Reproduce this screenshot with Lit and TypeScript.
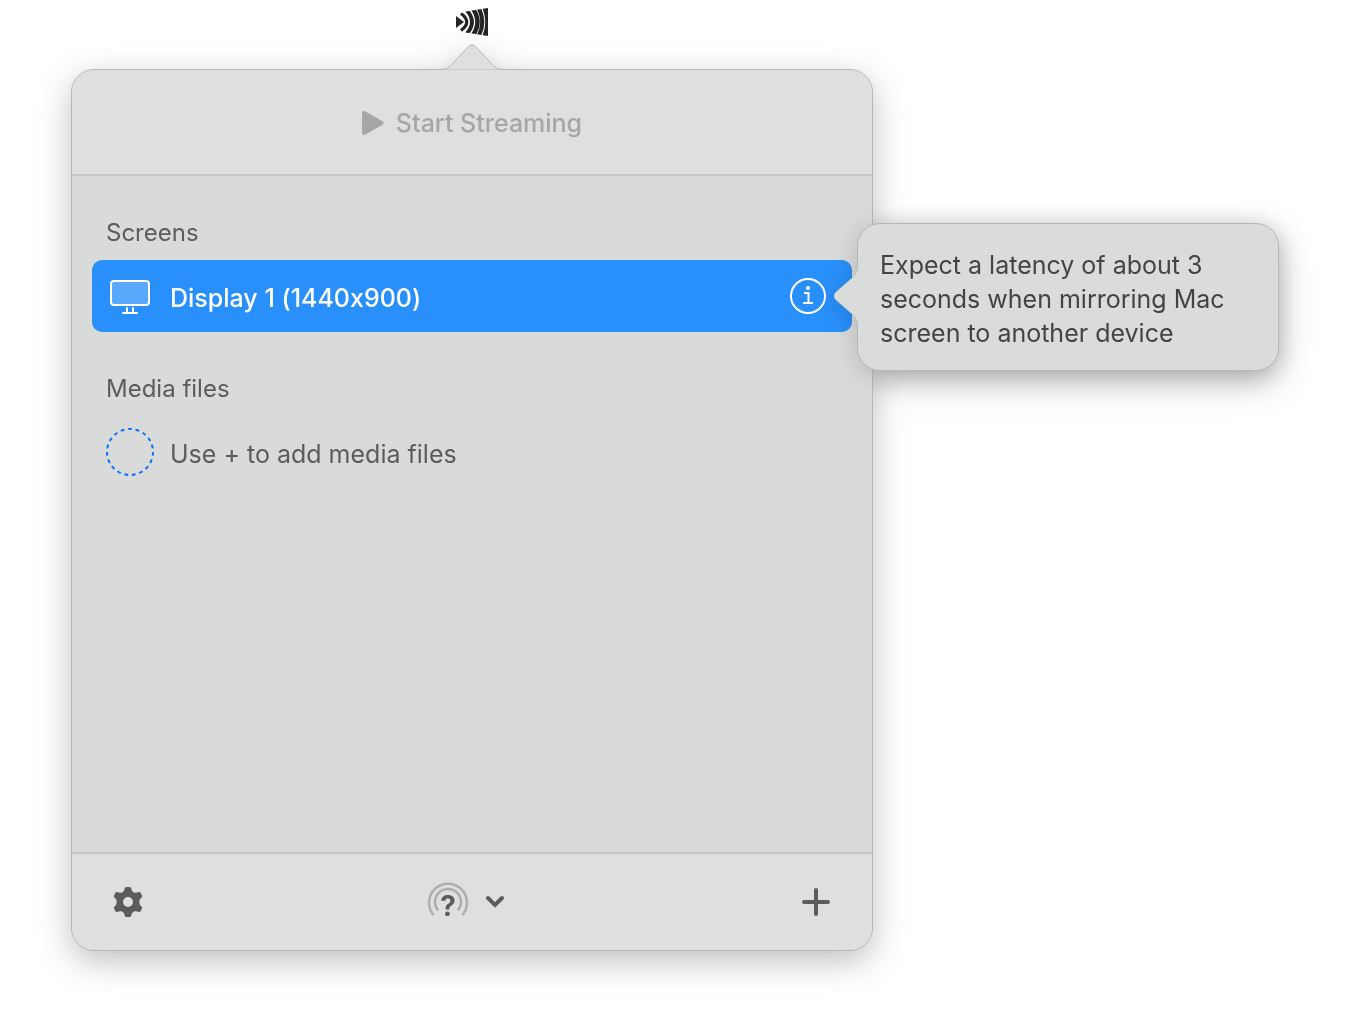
import { LitElement, html, css, svg } from "lit";
import { customElement, state } from "lit/decorators.js";

const logo = svg`
  <svg class="logo" viewBox="0 0 32 28" width="32" height="28" aria-hidden="true">
    <clipPath id="horn"><path d="M0 5 32 0v28L0 23z" /></clipPath>
    <g clip-path="url(#horn)">
      <path d="M0 8 8 14 0 20zM25.500-2Q33 14 25.500 30H34V-2z" fill="#242424" />
      <g fill="none" stroke="#242424">
        <path d="M5 5.500Q16.500 14 5 22.500" stroke-width="3.200" />
        <path d="M10.500 2Q21.500 14 10.500 26" stroke-width="3.800" />
        <path d="M15.500-1Q27.500 14 15.500 29" stroke-width="4.400" />
        <path d="M21.500-2Q31 14 21.500 30" stroke-width="4.200" />
      </g>
    </g>
  </svg>`;

@customElement("app-root")
export class AppRoot extends LitElement {
  @state() private hint = true;

  static styles = css`
    :host {
      display: block;
      min-height: 100vh;
      box-sizing: border-box;
      padding: 8px 71px 79px;
      background: #fff;
      color: #5b5d5c;
      font: 400 25px/34px Inter, "Liberation Sans", sans-serif;
      font-feature-settings: "calt" 0;
    }
    button {
      display: flex;
      align-items: center;
      margin: 0;
      padding: 0;
      border: 0;
      background: none;
      color: inherit;
      font: inherit;
    }
    svg {
      display: block;
      flex: none;
    }
    h2 {
      margin: 0 14px 10px;
      font-size: 24px;
      font-weight: 400;
      line-height: 34px;
    }
    ul {
      margin: 0 0 40px;
      padding: 0;
      list-style: none;
    }
    .popover {
      display: flex;
      flex-direction: column;
      align-items: center;
      max-width: 802px;
    }
    .window {
      display: flex;
      flex-direction: column;
      width: 100%;
      margin-top: 8px;
      filter: drop-shadow(0 10px 16px rgba(0, 0, 0, 0.25));
    }
    .arrow {
      align-self: center;
      margin-bottom: -1px;
      z-index: 1;
    }
    .panel {
      display: flex;
      flex-direction: column;
      box-sizing: border-box;
      min-height: calc(100vh - 148px);
      border: 1px solid #b5b6b6;
      border-radius: 23px;
      background: #d9dbda;
    }
    .top,
    .bottom {
      background: #dee0df;
    }
    .top {
      display: flex;
      justify-content: center;
      padding: 36px 0 34px;
      border-bottom: 2px solid #c4c6c5;
      border-radius: 22px 22px 0 0;
    }
    .start {
      gap: 12px;
      color: #a5a7a6;
      font-weight: 500;
    }
    .content {
      flex: 1;
      padding: 40px 20px 0;
    }
    .row {
      display: flex;
      align-items: center;
      gap: 16px;
      height: 72px;
      padding: 0 14px;
      border-radius: 10px;
    }
    .selected {
      position: relative;
      padding-right: 26px;
      background: #2990fb;
      color: #fff;
      font-weight: 500;
    }
    .name {
      flex: 1;
      padding-top: 4px;
    }
    .tip {
      position: absolute;
      top: -37px;
      left: calc(100% - 19px);
      display: flex;
      filter: drop-shadow(0 4px 12px rgba(0, 0, 0, 0.16));
      color: #434544;
      font-weight: 400;
    }
    .beak {
      margin: 43px -1px 0 0;
      z-index: 1;
    }
    .bubble {
      box-sizing: border-box;
      width: 422px;
      padding: 24px 22px 20px;
      border: 1px solid #b5b6b6;
      border-radius: 23px;
      background: #dadcdb;
    }
    .bottom {
      display: grid;
      grid-template-columns: 1fr auto 1fr;
      align-items: center;
      height: 96px;
      padding: 0 41px;
      border-top: 2px solid #c4c6c5;
      border-radius: 0 0 22px 22px;
    }
    .device {
      gap: 8px;
    }
    .add {
      justify-self: end;
    }
    .mark {
      font: 700 28px Inter, sans-serif;
    }
  `;

  render() {
    return html`
      <div class="popover">
        ${logo}
        <div class="window">
          <svg class="arrow" viewBox="0 0 60 26" width="60" height="26" aria-hidden="true">
            <path
              d="M-1 25.500C6 25.500 9 21 12 18L26 3Q30-1 34 3L48 18C51 21 54 25.500 61 25.500"
              fill="#dee0df"
              stroke="#b5b6b6"
            />
          </svg>
          <section class="panel">
            <header class="top">
              <button class="start" disabled>
                <svg viewBox="0 0 22 26" width="22" height="26" aria-hidden="true">
                  <path
                    d="M2 3v20L19.500 13z"
                    fill="currentColor"
                    stroke="currentColor"
                    stroke-width="4"
                    stroke-linejoin="round"
                  />
                </svg>
                Start Streaming
              </button>
            </header>
            <main class="content">
              <h2>Screens</h2>
              <ul>
                <li class="row selected">
                  <svg viewBox="0 0 48 40" width="48" height="40" fill="none" stroke="#fff" stroke-width="2" aria-hidden="true">
                    <rect x="5" y="5" width="38" height="24" rx="3" fill="#58a8fc" />
                    <path d="M21 32v5M27 32v5M17 37h14" stroke-linecap="round" />
                  </svg>
                  <span class="name">Display 1 (1440x900)</span>
                  <button aria-label="Latency information" @click=${() => (this.hint = !this.hint)}>
                    <svg viewBox="0 0 36 36" width="36" height="36" fill="none" stroke="#fff" stroke-width="2">
                      <circle cx="18" cy="18" r="17" />
                      <circle cx="18" cy="10" r="2" fill="#fff" stroke="none" />
                      <path d="M14 15h4.500v10M13 25h10" />
                    </svg>
                  </button>
                  ${this.hint
                    ? html`<div class="tip" role="tooltip">
                        <svg class="beak" viewBox="0 0 25 60" width="25" height="60" aria-hidden="true">
                          <path
                            d="M24.500 0C24.500 7 22 9 19 12L3 26Q-1 30 3 34L19 48C22 51 24.500 53 24.500 60"
                            fill="#dadcdb"
                            stroke="#b5b6b6"
                            stroke-opacity="0.500"
                          />
                          <path d="M24 5h1v50h-1z" fill="#dadcdb" />
                        </svg>
                        <div class="bubble">
                          Expect a latency of about 3 seconds when mirroring Mac screen to another device
                        </div>
                      </div>`
                    : null}
                </li>
              </ul>
              <h2>Media files</h2>
              <ul>
                <li class="row">
                  <svg viewBox="0 0 48 48" width="48" height="48" aria-hidden="true">
                    <circle cx="24" cy="24" r="23" fill="none" stroke="#0a72f5" stroke-width="2" pathLength="152" stroke-dasharray="4 4" />
                  </svg>
                  <span class="name">Use + to add media files</span>
                </li>
              </ul>
            </main>
            <footer class="bottom">
              <button aria-label="Settings">
                <svg viewBox="-15 -15 30 30" width="30" height="30" fill="currentColor">
                  <path
                    fill-rule="evenodd"
                    d="M-1.500-15H1.500Q3-15 3.300-13.500C3.800-11 5-9 8-9.300L11-10Q12-10.300 12.500-9.300L14-6.500Q14.500-5.500 13.500-4.600C10.500-2 10.500 2 13.500 4.600Q14.500 5.500 14 6.500L12.500 9.300Q12 10.300 11 10L8 9.300C5 9 3.800 11 3.300 13.500Q3 15 1.500 15H-1.500Q-3 15-3.300 13.500C-3.800 11-5 9-8 9.300L-11 10Q-12 10.300-12.500 9.300L-14 6.500Q-14.500 5.500-13.500 4.600C-10.500 2-10.500-2-13.500-4.600Q-14.500-5.500-14-6.500L-12.500-9.300Q-12-10.300-11-10L-8-9.300C-5-9-3.800-11-3.300-13.500Q-3-15-1.500-15zM0-5A5 5 0 1 0 0 5 5 5 0 1 0 0-5z"
                  />
                </svg>
              </button>
              <button class="device" aria-label="Choose device">
                <svg viewBox="0 0 40 40" width="40" height="40" fill="none">
                  <path d="M5.500 33A19 19 0 1 1 34.500 33M10.200 28.500A13 13 0 1 1 29.800 28.500" stroke="#acaead" stroke-width="2.400" />
                  <text class="mark" x="20" y="34" text-anchor="middle" fill="currentColor">?</text>
                </svg>
                <svg viewBox="0 0 40 40" width="40" height="40" fill="none">
                  <path d="M12 16 19 23 26 16" stroke="currentColor" stroke-width="4" stroke-linecap="round" />
                </svg>
              </button>
              <button class="add" aria-label="Add media files">
                <svg viewBox="0 0 30 30" width="30" height="30">
                  <path d="M15 3v24M3 15h24" stroke="currentColor" stroke-width="4" stroke-linecap="round" />
                </svg>
              </button>
            </footer>
          </section>
        </div>
      </div>
    `;
  }
}
